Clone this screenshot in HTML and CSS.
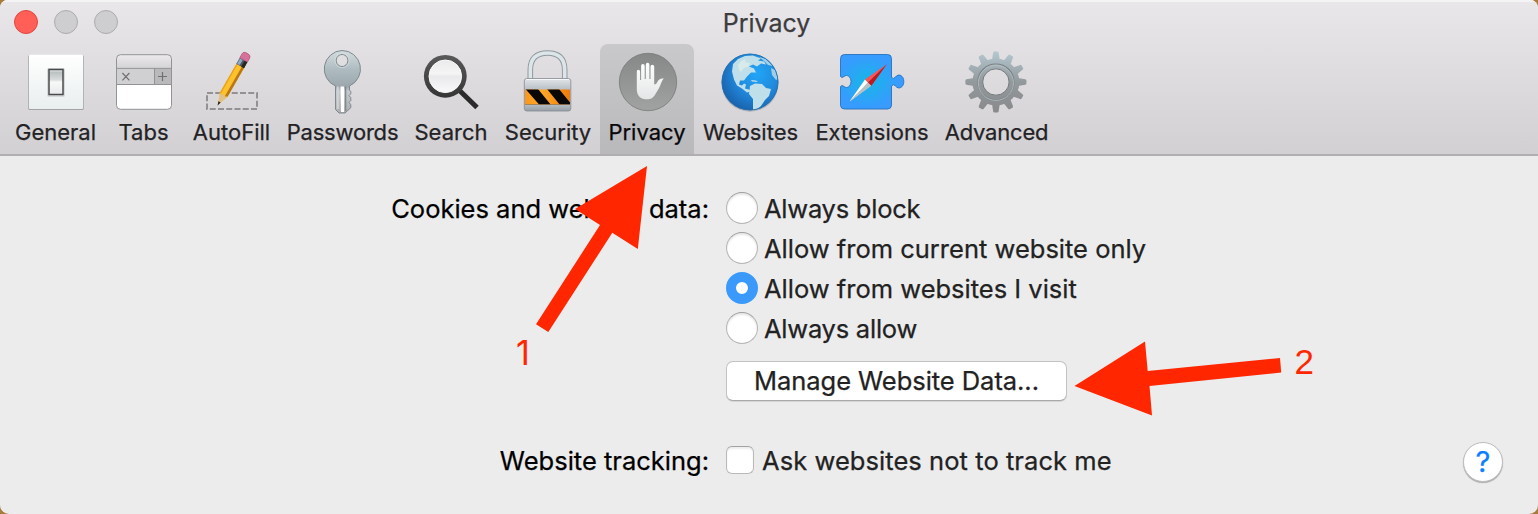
FILE: index.html
```html
<!DOCTYPE html>
<html lang="en">
<head>
<meta charset="utf-8">
<title>Privacy</title>
<link rel="stylesheet" href="styles.css">
</head>
<body>
<div class="window">
  <header class="toolbar">
    <div class="titlebar">
      <div class="lights"><i class="light close"></i><i class="light"></i><i class="light"></i></div>
      <h1 class="title">Privacy</h1>
    </div>
    <nav class="tabs">
      <div class="tab general">
        <svg viewBox="6 44 99 74">
          <defs>
            <linearGradient id="plate" x2="0" y2="1"><stop stop-color="#fff"/><stop offset="1" stop-color="#e9eeef"/></linearGradient>
            <linearGradient id="switch" x2="0" y2="1"><stop stop-color="#eee"/><stop offset=".12" stop-color="#bcc1c2"/><stop offset=".42" stop-color="#d9dddd"/><stop offset=".5" stop-color="#f7f9f9"/><stop offset="1" stop-color="#e7eaea"/></linearGradient>
          </defs>
          <rect x="28.3" y="55" width="55.4" height="55" rx="1.5" fill="#a1a3a6"/>
          <rect x="29" y="54.7" width="54" height="54.300" rx="1" fill="url(#plate)"/>
          <rect x="47" y="68" width="18" height="29" rx="2" fill="#d5d9da"/>
          <rect x="49" y="69.500" width="14" height="25" fill="url(#switch)" stroke="#4a4b4c" stroke-width="1.500"/>
        </svg>
        <span>General</span>
      </div>
      <div class="tab tabs-tab">
        <svg viewBox="105 44 79 74">
          <defs><linearGradient id="winbar" x2="0" y2="1"><stop stop-color="#eceaed"/><stop offset="1" stop-color="#d4d3d5"/></linearGradient></defs>
          <rect x="116.500" y="54.700" width="55" height="54.600" rx="4" fill="#fff"/>
          <path d="M116.500 68V58.700a4 4 0 0 1 4-4h47a4 4 0 0 1 4 4V68z" fill="url(#winbar)"/>
          <path d="M116.500 68.500h38v15.500h-38z" fill="#d0cfd1"/><path d="M154.500 68.500h17v15.500h-17z" fill="#b9b9bb"/>
          <path d="M116.500 68.400h55M116.500 84.500h55M154.500 68.400v16" stroke="#929294" fill="none"/>
          <path d="M122.400 73l7 7.400m0-7.400l-7 7.400M158 76.500h9M162.500 72v9" stroke="#707072" stroke-width="1.200" fill="none"/>
          <rect x="116.500" y="54.700" width="55" height="54.600" rx="4" fill="none" stroke="#929395"/>
        </svg>
        <span>Tabs</span>
      </div>
      <div class="tab autofill">
        <svg viewBox="184 44 95 74">
          <rect x="207" y="93" width="50" height="16" fill="none" stroke="#929193" stroke-width="2" stroke-dasharray="6 2.250"/>
          <g transform="translate(217.800 105) rotate(29.800)">
            <path d="M0 0L-4.400-12V-46H4.400V-12z" fill="#fdc12c"/>
            <path d="M1.800-11V-46H4.400V-12z" fill="#b87816"/><path d="M-4.400-12V-46H-3V-11z" fill="#eba018"/>
            <path d="M0 0L-4.400-12-1.800-10.500 0-12 2-10.500 4.400-12z" fill="#dfc18b"/>
            <path d="M0 .5l-1.300-4h2.600z" fill="#25211e"/>
            <path d="M-4.400-52h8.800v7h-8.800z" fill="#4d5965"/><path d="M-3.800-51.500h3v6h-3z" fill="#8bacc6"/><path d="M1.200-52H4.400v7H1.200z" fill="#29251f"/>
            <path d="M-4.400-52v-4.500Q-4.400-59.500 0-59.500T4.400-56.500v4.500z" fill="#d8709b" stroke="#a74e70" stroke-width=".6"/>
          </g>
        </svg>
        <span>AutoFill</span>
      </div>
      <div class="tab passwords">
        <svg viewBox="279 44 127 74">
          <defs>
            <linearGradient id="key" x2="0" y2="1"><stop stop-color="#d4dddf"/><stop offset=".3" stop-color="#aebcc1"/><stop offset=".58" stop-color="#9ba7ac"/><stop offset=".65" stop-color="#c5cbcd"/><stop offset="1" stop-color="#aaaeb0"/></linearGradient>
          </defs>
          <path fill-rule="evenodd" d="M342 50.500a18.500 18.500 0 0 1 7.500 35.400V90l1.300 1.600v2.200l-1.800 1.800 1.800 2v3l-1.800 1.800 1.800 2.300v3L345 113h-6l-3.500-3.500V86A18.500 18.500 0 0 1 342 50.500zm0 4a5.800 6 0 1 0 .1 0z" fill="url(#key)" stroke="#7f898e"/>
          <path d="M340.500 86.500h3.500V112h-3z" fill="#fff"/><path d="M336.800 86.500h2V109h-2z" fill="#cfd4d6"/><path d="M345 86.500h1.300V111H345z" fill="#828789"/>
          <circle cx="342.100" cy="60.500" r="7.200" fill="none" stroke="#d8e1e3" stroke-width="1" opacity=".6"/>
        </svg>
        <span>Passwords</span>
      </div>
      <div class="tab search">
        <svg viewBox="406 44 90 74">
          <defs><linearGradient id="glass" x2="0" y2="1"><stop stop-color="#eae9eb"/><stop offset=".42" stop-color="#f6f5f6"/><stop offset=".5" stop-color="#e9e8ea"/><stop offset="1" stop-color="#f9f8fa"/></linearGradient>
          <linearGradient id="rim" x2="0" y2="1"><stop stop-color="#59595a"/><stop offset="1" stop-color="#363637"/></linearGradient></defs>
          <path d="M459 90L477 107.500" stroke="#2b2b2c" stroke-width="5"/>
          <circle cx="445.300" cy="76.300" r="21.400" fill="url(#rim)"/>
          <circle cx="445.300" cy="76.300" r="16.300" fill="url(#glass)" stroke="#fafafa"/>
        </svg>
        <span>Search</span>
      </div>
      <div class="tab security">
        <svg viewBox="496 44 104 74">
          <defs><linearGradient id="lock" x2="0" y2="1"><stop stop-color="#e2e6e9"/><stop offset=".35" stop-color="#b7bec4"/><stop offset=".8" stop-color="#b7bec4"/><stop offset="1" stop-color="#969ea4"/></linearGradient>
          <linearGradient id="orange"><stop stop-color="#f8971c"/><stop offset=".35" stop-color="#ffa928"/><stop offset="1" stop-color="#ee7b08"/></linearGradient>
          <clipPath id="band"><path d="M525 89.500h45v15h-45z"/></clipPath></defs>
          <path d="M530.300 79V70q0-17 17.200-17T564.700 70v9" fill="none" stroke="#8f999f" stroke-width="5.600"/>
          <path d="M530.300 79V70q0-17 17.200-17T564.700 70v9" fill="none" stroke="#dce5e8" stroke-width="3.600"/>
          <rect x="524.300" y="78.500" width="46.500" height="32.500" rx="2.500" fill="url(#lock)" stroke="#858c92" stroke-width=".8"/>
          <path d="M526 79.500h43" stroke="#f4f6f7"/>
          <g clip-path="url(#band)"><path d="M525 89h45v16h-45z" fill="url(#orange)"/><path d="M525.500 89h12.500l13 16h-11.500zM547 89h12l13 16h-12z" fill="#090806"/></g>
          <path d="M525 104.500h45" stroke="#8f6e4d" stroke-width=".7"/>
        </svg>
        <span>Security</span>
      </div>
      <div class="tab privacy selected">
        <svg viewBox="600 44 94 74">
          <defs><linearGradient id="disc" x2="0" y2="1"><stop stop-color="#868888"/><stop offset="1" stop-color="#a1a3a3"/></linearGradient>
          <linearGradient id="hand" x2="0" y2="1"><stop stop-color="#fff"/><stop offset="1" stop-color="#e4e5e6"/></linearGradient></defs>
          <circle cx="648" cy="82" r="28.700" fill="url(#disc)" stroke="#777979" stroke-width=".8"/>
          <path d="M636.800 89V71.500q0-1.800 1.600-1.800t1.700 1.800V80h1V66q0-1.900 1.800-1.900t1.800 1.900v13h1.100V64.700q0-1.900 1.800-1.900t1.800 1.900V79h1.100V66.600q0-1.900 1.800-1.900t1.900 1.900V84.500c1.500 0 2.200-.8 3-2.200 1.600-2.900 3-4.100 6.700-3.700-1.400 1.200-2.100 3-3 5.200-1.500 3.800-2.900 6.500-4.700 9-2.300 4.500-4.700 6.500-8.600 6.500C640.400 99.300 636.800 96 636.800 89z" fill="url(#hand)"/>
        </svg>
        <span>Privacy</span>
      </div>
      <div class="tab websites">
        <svg viewBox="694 44 113 74">
          <defs><radialGradient id="ocean" cx=".62" cy=".35" r=".68"><stop stop-color="#20a6f8"/><stop offset=".55" stop-color="#2189dc"/><stop offset="1" stop-color="#1963ae"/></radialGradient>
          <clipPath id="globe"><circle cx="750" cy="82" r="28"/></clipPath></defs>
          <ellipse cx="750" cy="83.500" rx="28.500" ry="28.200" fill="#8b91a0" opacity=".5"/>
          <circle cx="750" cy="82" r="28.300" fill="url(#ocean)"/>
          <g clip-path="url(#globe)" fill="#bfdfea">
            <path d="M733 64l5-5 7-3 8-.5 8 3-3 2 6 1 2 3-5-1-4 3-4-2-4 2 5 2 2 4-5 0-4 4-3 4-4 0-1 4 3 1 2-2 2 1-1 4 4 1 2 2-4 1-5-4-5-3-3-6-2-8z"/>
            <path d="M751 80l5 .5 2 1.500-6-.5zM750 86l5-2.500 7 .5 4 4 5 1-2 7-4 4-4 6-5 4-3 0 0-11-4-5z"/>
            <path d="M759 57l7 2 7 7-5-1-4-4zM771 68l4 2 3 9-2 1-4-5z" opacity=".8"/>
          </g>
          <path d="M738 65l3-4 5-2-1 3 5 1-2 4-4 1-3 4-2-2z" fill="#e2eee9" opacity=".7"/>
          <circle cx="750" cy="82" r="28" fill="none" stroke="#286da7" stroke-width=".8"/>
        </svg>
        <span>Websites</span>
      </div>
      <div class="tab extensions">
        <svg viewBox="807 44 130 74">
          <defs><radialGradient id="puzzle" cx=".43" cy=".5" r=".48"><stop stop-color="#16b7e6"/><stop offset="1" stop-color="#379bff"/></radialGradient></defs>
          <path d="M844.500 54.500h43a4 4 0 0 1 4 4V77.500q2 2 4-.5c3-4 8.300-1.500 8.300 4.500s-5.300 8.500-8.300 4.500q-2-2.500-4 0V105a4 4 0 0 1-4 4h-43a4 4 0 0 1-4-4V86.500q1.500-2 3.500 0c3 2.700 7-.5 7-5s-4-7.700-7-5q-2 2-3.500 0V58.500a4 4 0 0 1 4-4z" fill="url(#puzzle)" stroke="#2672bd" stroke-width=".9"/>
          <path d="M849.500 101.500L865 79.500l6 6z" fill="#fff"/><path d="M849.500 101.500L868 82.300l3.400 3.500z" fill="#b8bfc2"/>
          <path d="M887 64L865 79.500l3 3z" fill="#ff5350"/><path d="M887 64L871.400 85.800 868 82.400z" fill="#c91418"/>
        </svg>
        <span>Extensions</span>
      </div>
      <div class="tab advanced">
        <svg viewBox="937 44 119 74">
          <defs><linearGradient id="metal" x2="0" y2="1"><stop stop-color="#b6cad3"/><stop offset=".5" stop-color="#92999c"/><stop offset="1" stop-color="#89898b"/></linearGradient>
          <path id="tooth" d="M992 60l1.200-7.500q.2-1 1.200-1h3q1 0 1.200 1l1.200 7.500z"/>
          <mask id="gear" maskUnits="userSpaceOnUse" x="960" y="46" width="72" height="72"><g fill="#fff">
            <use href="#tooth"/><use href="#tooth" transform="rotate(30 995.900 82)"/><use href="#tooth" transform="rotate(60 995.900 82)"/><use href="#tooth" transform="rotate(90 995.900 82)"/><use href="#tooth" transform="rotate(120 995.900 82)"/><use href="#tooth" transform="rotate(150 995.900 82)"/><use href="#tooth" transform="rotate(180 995.900 82)"/><use href="#tooth" transform="rotate(210 995.900 82)"/><use href="#tooth" transform="rotate(240 995.900 82)"/><use href="#tooth" transform="rotate(270 995.900 82)"/><use href="#tooth" transform="rotate(300 995.900 82)"/><use href="#tooth" transform="rotate(330 995.900 82)"/>
            <circle cx="995.900" cy="82" r="23.500"/></g><circle cx="995.900" cy="82" r="13.200" fill="#000"/></mask></defs>
          <path d="M962 50h68v64h-68z" fill="url(#metal)" mask="url(#gear)"/>
          <circle cx="995.900" cy="82" r="18" fill="none" stroke="#788287" stroke-width="1.200"/><circle cx="995.900" cy="82.800" r="17.600" fill="none" stroke="#b9c1c4" stroke-width=".8"/>
          <circle cx="995.900" cy="82" r="13.200" fill="none" stroke="#737a7d"/>
        </svg>
        <span>Advanced</span>
      </div>
    </nav>
  </header>
  <main class="pane">
    <section class="row cookies">
      <div class="row-label">Cookies and website data:</div>
      <div class="choices">
        <div class="choice"><i class="radio"></i><span class="tight">Always block</span></div>
        <div class="choice"><i class="radio"></i><span>Allow from current website only</span></div>
        <div class="choice"><i class="radio checked"></i><span>Allow from websites I visit</span></div>
        <div class="choice"><i class="radio"></i><span class="tight">Always allow</span></div>
        <div class="button">Manage Website Data...</div>
      </div>
    </section>
    <section class="row tracking">
      <div class="row-label">Website tracking:</div>
      <div class="choice"><i class="checkbox"></i><span class="loose">Ask websites not to track me</span></div>
      <div class="help">?</div>
    </section>
  </main>
</div>
<svg class="annotations" viewBox="0 0 1538 514">
  <path d="M647 166L637.800 249 612.300 232.800 548.300 332 536 324.300 600 225 575 209z"/>
  <path d="M1074.500 386L1145 341.500 1147.700 371 1280 358 1281.200 372.500 1149.500 386 1152 415.500z"/>
  <text class="one" x="516" y="364.500">1</text>
  <text x="1294.500" y="374">2</text>
</svg>
</body>
</html>
```
FILE: styles.css
```css
* { box-sizing: border-box; }
body { margin: 0; background: #a97c3d; font-family: Inter, "Liberation Sans", sans-serif; overflow: hidden; }
.window { width: 1538px; height: 514px; border-radius: 8px 8px 9px 9px; background: #ececec; overflow: hidden; -webkit-text-stroke: .25px currentColor; }
.toolbar { height: 156px; background: linear-gradient(#e9e7ea, #d2d0d3); border-bottom: 2px solid #b0aeb0; box-shadow: inset 0 2px #f5f4f5; }
.titlebar { height: 44px; display: grid; grid-template-columns: 1fr auto 1fr; align-items: center; padding-left: 14px; }
.lights { display: flex; gap: 16px; }
.light { width: 24px; height: 24px; border-radius: 50%; background: #cecdcf; border: 1px solid #acabad; }
.light.close { background: #ff5f57; border-color: #e2463f; }
.title { margin: 2px 19px 0 0; font-size: 25px; line-height: 30px; font-weight: 400; color: #3d3c3e; }
.tabs { display: flex; padding-left: 6px; height: 110px; }
.tab { display: flex; flex-direction: column; align-items: center; height: 110px; font-size: 22px; line-height: 28px; color: #232224; white-space: nowrap; }
.tab svg { width: 100%; height: 74px; flex: none; }
.tab.selected { background: linear-gradient(#c9c8ca, #b9b8ba); border-radius: 8px 8px 0 0; color: #08070a; }
.general { width: 99px; }
.tabs-tab { width: 79px; }
.tabs-tab span { margin-right: 2px; }
.autofill { width: 95px; }
.passwords { width: 127px; letter-spacing: -.2px; }
.search { width: 90px; }
.security { width: 104px; }
.privacy { width: 94px; }
.websites { width: 113px; }
.extensions { width: 130px; }
.advanced { width: 119px; letter-spacing: -.2px; }
.pane { padding-top: 32px; font-size: 25.5px; line-height: 40px; color: #222; white-space: nowrap; }
.row { display: flex; align-items: flex-start; }
.row-label { width: 709px; padding-top: 1px; text-align: right; margin-right: 17px; color: #000; }
.choice { display: flex; align-items: center; height: 40px; }
.choice span { padding-top: 2px; }
.tight { letter-spacing: -.24px; }
.loose { letter-spacing: .06px; }
.radio { width: 32px; height: 32px; border-radius: 50%; background: #fff; border: 1.5px solid #b5b5b5; border-top-color: #9d9d9d; box-shadow: inset 0 2px 2px #e8e8e8; margin-right: 6px; }
.radio.checked { border: 10.500px solid #3b99fc; box-shadow: none; }
.button { width: 341px; height: 40px; margin: 13px 0 1px; border: 1px solid #c2c2c2; border-bottom-color: #a9a9a9; border-radius: 7px; background: #fff; box-shadow: 0 1px #d5d5d5; text-align: center; line-height: 37px; color: #222; letter-spacing: -.05px; }
.tracking { margin-top: 38px; }
.checkbox { width: 28px; height: 28px; border-radius: 6px; background: #fff; border: 1.5px solid #b9b9b9; border-top-color: #a2a2a2; box-shadow: inset 0 2px 2px #eee; margin-right: 8px; }
.help { width: 40px; height: 40px; margin: 2px 35px 0 auto; border: 1px solid #bdbdbd; border-radius: 50%; background: #fff; box-shadow: 0 1px 1px #aaa; color: #0a80ff; font-size: 29px; line-height: 38px; text-align: center; }
/* Red callouts are drawn over the window */
.annotations { position: absolute; left: 0; top: 0; width: 1538px; height: 514px; fill: #ff2600; font: 35px "Liberation Sans", sans-serif; }
.annotations .one { font: 34px Inter, sans-serif; }
```
